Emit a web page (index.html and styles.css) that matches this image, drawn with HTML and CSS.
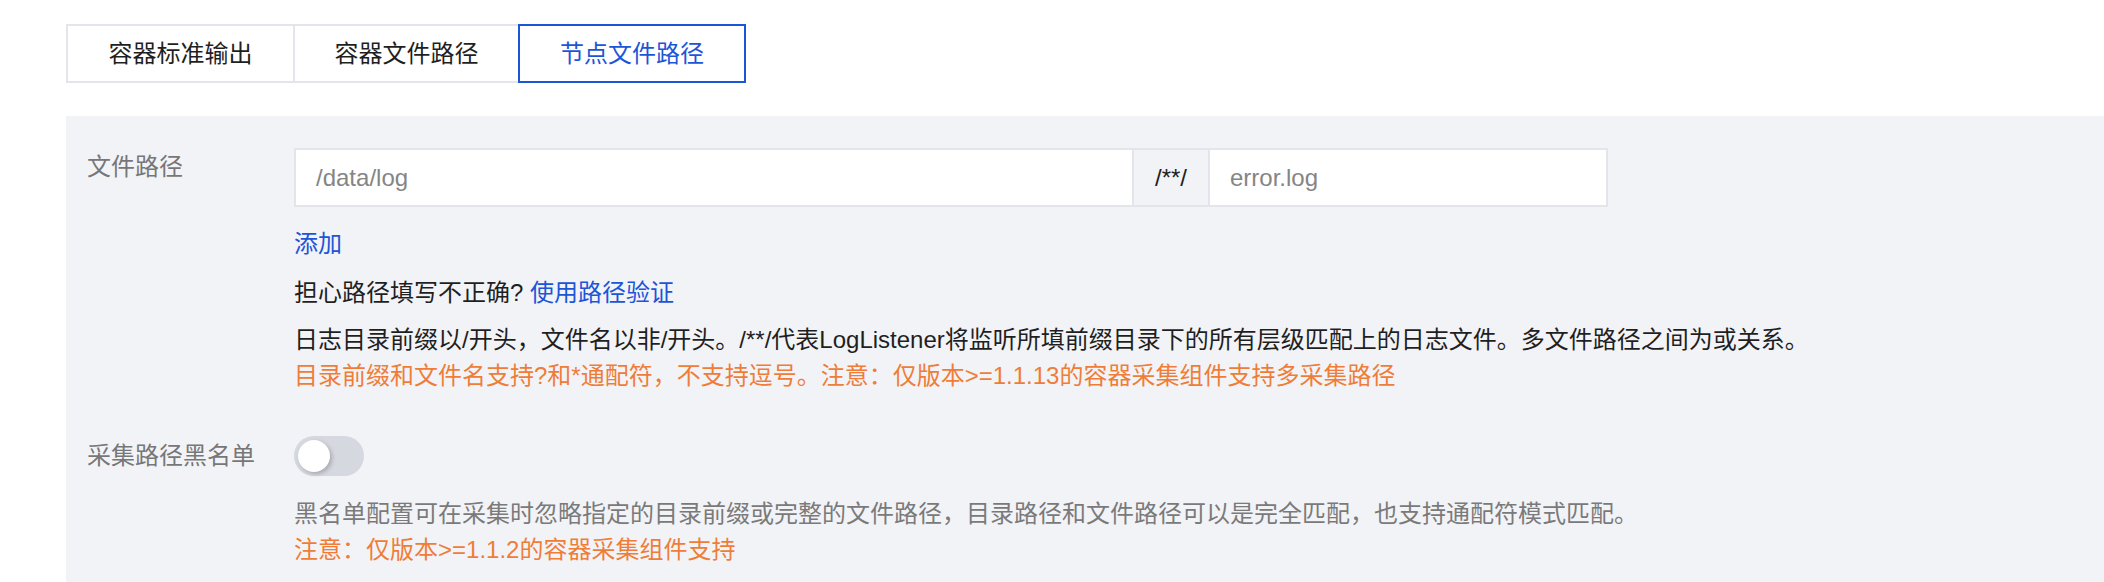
FILE: index.html
```html
<!DOCTYPE html>
<html lang="zh-CN">
<head>
    <meta charset="UTF-8">
    <meta name="viewport" content="width=device-width, initial-scale=1.0">
    <title>日志采集路径</title>
    <link rel="stylesheet" href="styles.css">
</head>
<body>
    <div class="tabs">
        <div class="tab">容器标准输出</div>
        <div class="tab">容器文件路径</div>
        <div class="tab active">节点文件路径</div>
    </div>

    <div class="panel">
        <div class="form-row">
            <div class="form-label">文件路径</div>
            <div class="form-field">
                <div class="path-group">
                    <input class="path-input dir-input" type="text" placeholder="/data/log">
                    <span class="path-addon">/**/</span>
                    <input class="path-input file-input" type="text" placeholder="error.log">
                </div>
                <a class="link add-link">添加</a>
                <p class="check-tip">担心路径填写不正确? <a class="link">使用路径验证</a></p>
                <p class="help first">日志目录前缀以/开头，文件名以非/开头。/**/代表LogListener将监听所填前缀目录下的所有层级匹配上的日志文件。多文件路径之间为或关系。</p>
                <p class="help warn">目录前缀和文件名支持?和*通配符，不支持逗号。注意：仅版本&gt;=1.1.13的容器采集组件支持多采集路径</p>
            </div>
        </div>

        <div class="form-row blacklist-row">
            <div class="form-label">采集路径黑名单</div>
            <div class="form-field">
                <span class="switch"><span class="switch-knob"></span></span>
                <p class="help muted">黑名单配置可在采集时忽略指定的目录前缀或完整的文件路径，目录路径和文件路径可以是完全匹配，也支持通配符模式匹配。</p>
                <p class="help warn">注意：仅版本&gt;=1.1.2的容器采集组件支持</p>
            </div>
        </div>
    </div>
</body>
</html>
```

FILE: styles.css
```css
body {
    margin: 0;
    padding: 24px 0 0 66px;
    font-family: "Liberation Sans", "Noto Sans CJK SC", sans-serif;
    font-size: 24px;
    line-height: 36px;
    color: #1f1f1f;
    background-color: #fff;
}

p {
    margin: 0;
}

.tabs {
    display: flex;
}

.tab {
    box-sizing: border-box;
    height: 59px;
    width: 227px;
    display: flex;
    align-items: center;
    justify-content: center;
    border: 2px solid #e4e5ea;
    margin-left: -2px;
    color: #1f1f1f;
    cursor: pointer;
}

.tab:first-child {
    margin-left: 0;
    width: 229px;
}

.tab.active {
    width: 228px;
    border-color: #1d55d8;
    color: #1d55d8;
    position: relative;
}

.panel {
    margin-top: 33px;
    padding: 32px 0 14px 21px;
    background-color: #f2f3f7;
}

.form-row {
    display: flex;
}

.form-label {
    width: 207px;
    flex: none;
    padding-top: 1px;
    color: #777;
}

.form-field {
    flex: 1;
}

.path-group {
    box-sizing: border-box;
    display: flex;
    width: 1314px;
    height: 59px;
    border: 2px solid #e4e5ea;
    background-color: #fff;
}

.path-input {
    box-sizing: border-box;
    height: 100%;
    padding: 0 20px;
    border: none;
    outline: none;
    background: transparent;
    font-family: inherit;
    font-size: 24px;
    color: #1f1f1f;
}

.path-input::placeholder {
    color: #858585;
}

.dir-input {
    width: 836px;
    flex: none;
}

.file-input {
    flex: 1;
    min-width: 0;
}

.path-addon {
    box-sizing: border-box;
    width: 78px;
    flex: none;
    display: flex;
    align-items: center;
    justify-content: center;
    border-left: 2px solid #e4e5ea;
    border-right: 2px solid #e4e5ea;
    background-color: #f2f3f7;
    color: #1f1f1f;
}

.link {
    color: #1d55d8;
    cursor: pointer;
    text-decoration: none;
}

.add-link {
    display: block;
    width: fit-content;
    margin-top: 19px;
}

.check-tip {
    margin-top: 13px;
}

.help.first {
    margin-top: 11px;
}

.help.muted {
    margin-top: 20px;
    color: #7a7a7a;
}

.warn {
    color: #ef7d37;
}

.blacklist-row {
    margin-top: 42px;
}

.blacklist-row .form-label {
    padding-top: 2px;
}

.switch {
    box-sizing: border-box;
    display: flex;
    align-items: center;
    width: 70px;
    height: 40px;
    padding: 0 4px;
    border-radius: 20px;
    background-color: #d5d8df;
}

.switch-knob {
    width: 32px;
    height: 32px;
    border-radius: 50%;
    background-color: #fff;
    box-shadow: 2px 2px 4px rgba(0, 0, 0, 0.22);
}
```
